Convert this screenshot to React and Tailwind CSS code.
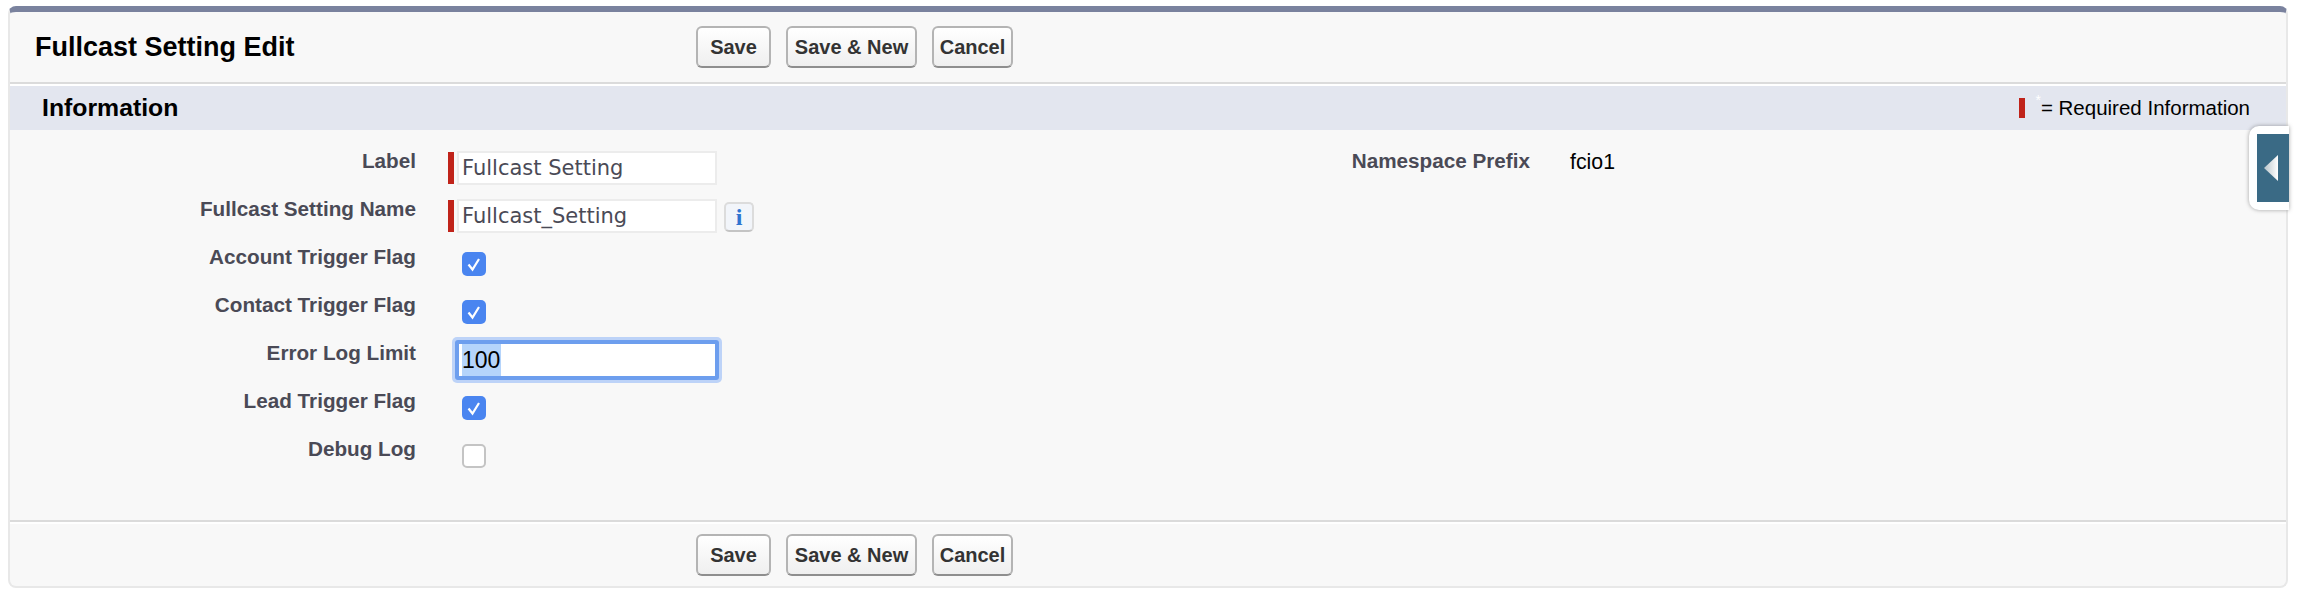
const labelClass = "w-[406px] text-right text-[20.7px] font-bold text-[#4a4a56] leading-[48px]";

function Button({ width, children }) {
  return (
    <button className={`${width} h-[42px] rounded-md border-2 border-[#b4b4b4] border-b-[#8e8e8e] bg-gradient-to-b from-white to-[#efefef] text-[20px] font-bold text-[#333] whitespace-nowrap`}>
      {children}
    </button>
  );
}

function ButtonGroup() {
  return (
    <div className="flex gap-[15px]">
      <Button width="w-[75px]">Save</Button>
      <Button width="w-[131px]">Save &amp; New</Button>
      <Button width="w-[81px]">Cancel</Button>
    </div>
  );
}

function Row({ label, children }) {
  return (
    <div className="flex h-12">
      <div className={labelClass}>{label}</div>
      <div className="flex items-center pl-8 pt-3.5">{children}</div>
    </div>
  );
}

function RequiredInput({ value }) {
  return (
    <div className="flex h-[34px] items-center gap-[3px]">
      <div className="w-1.5 h-8 bg-[#c0231a]"></div>
      <div className="w-[260px] h-[34px] border-2 border-[#ececec] bg-white pl-[3px] text-[21px] leading-[30px] text-[#4a4a56] font-['DejaVu_Sans',sans-serif]">
        {value}
      </div>
    </div>
  );
}

function Checkbox({ checked }) {
  if (!checked) {
    return <div className="ml-3.5 w-6 h-6 rounded-[5px] border-2 border-[#c4c4c4] bg-white"></div>;
  }
  return (
    <div className="ml-3.5 w-6 h-6 rounded-[5px] bg-[#4a85f0] flex items-center justify-center">
      <svg width="24" height="24" viewBox="0 0 24 24" fill="none">
        <path d="M6.5 12.5 L10.5 17.5 L17 7" stroke="white" strokeWidth="2.2" />
      </svg>
    </div>
  );
}

export default function App() {
  return (
    <div className="h-[598px] bg-white pt-1.5 pl-2 pr-4 font-['Liberation_Sans',Arial,sans-serif]">
      <div className="relative h-[582px] rounded-lg border-x-2 border-b-2 border-[#e8e8e8] border-t-[6px] border-t-[#7a829e] bg-[#f8f8f8]">
        <div className="flex h-[70px] items-center">
          <h1 className="w-[686px] pl-[25px] text-[27px] font-bold text-black">Fullcast Setting Edit</h1>
          <ButtonGroup />
        </div>
        <div className="h-1 border-t-2 border-[#dbdbdb] bg-white"></div>
        <div className="flex h-11 items-center justify-between bg-[#e3e6ef] pl-8 pr-[36px]">
          <h2 className="text-[24.8px] font-bold text-black">Information</h2>
          <div className="flex items-center text-[20.5px] text-black">
            <span className="mr-[10px] h-5 w-1.5 bg-[#c0231a]"></span>
            <span className="text-[14px] text-white self-start leading-none">*</span>
            <span>= Required Information</span>
          </div>
        </div>

        <div className="flex h-[390px] pt-[7px]">
          <div className="w-[1120px]">
            <Row label="Label"><RequiredInput value="Fullcast Setting" /></Row>
            <Row label="Fullcast Setting Name">
              <RequiredInput value="Fullcast_Setting" />
              <button className="ml-[7px] mt-[2px] w-[30px] h-[30px] rounded-[5px] border-2 border-[#dcdcdc] border-b-[#c4c4c4] bg-[#f2f5fa] text-[24px] font-bold leading-none text-[#2f74d0] font-['Liberation_Serif',serif]">
                i
              </button>
            </Row>
            <Row label="Account Trigger Flag"><Checkbox checked /></Row>
            <Row label="Contact Trigger Flag"><Checkbox checked /></Row>
            <Row label="Error Log Limit">
              <div className="ml-1 w-[270px] h-[46px] rounded-[5px] bg-[#bdd3f8] p-[3px]">
                <div className="h-full rounded-[3px] bg-[#6d9eee] p-1">
                  <div className="h-full bg-white pl-[3px] text-[23px] leading-[32px] text-black">
                    <span className="inline-block bg-[#b5d4fb] pr-px">100</span>
                  </div>
                </div>
              </div>
            </Row>
            <Row label="Lead Trigger Flag"><Checkbox checked /></Row>
            <Row label="Debug Log"><Checkbox /></Row>
          </div>
          <div className="flex h-12">
            <div className="w-[400px] text-right text-[20.7px] font-bold text-[#4a4a56] leading-[48px]">Namespace Prefix</div>
            <div className="pl-10 pt-px text-[21.3px] leading-[48px] text-black">fcio1</div>
          </div>
        </div>

        <div className="h-1 border-t-2 border-[#dbdbdb] bg-white"></div>
        <div className="flex pl-[686px] pt-2.5">
          <ButtonGroup />
        </div>

        {/* side panel collapse tab */}
        <div className="absolute right-[-3px] top-[114px] w-10 h-[84px] rounded-l-[10px] bg-white py-2 pl-2 shadow-[0_0_4px_rgba(0,0,0,0.35)]">
          <div className="flex h-full items-center bg-[#3a6a85] pl-[7px]">
            <svg width="14" height="26" viewBox="0 0 14 26">
              <defs>
                <linearGradient id="tabArrow" x1="0" x2="1" y1="0" y2="0">
                  <stop offset="0" stopColor="#b8c4ca" />
                  <stop offset="1" stopColor="#ffffff" />
                </linearGradient>
              </defs>
              <path d="M14 0 L0 13 L14 26 Z" fill="url(#tabArrow)" />
            </svg>
          </div>
        </div>
      </div>
    </div>
  );
}
